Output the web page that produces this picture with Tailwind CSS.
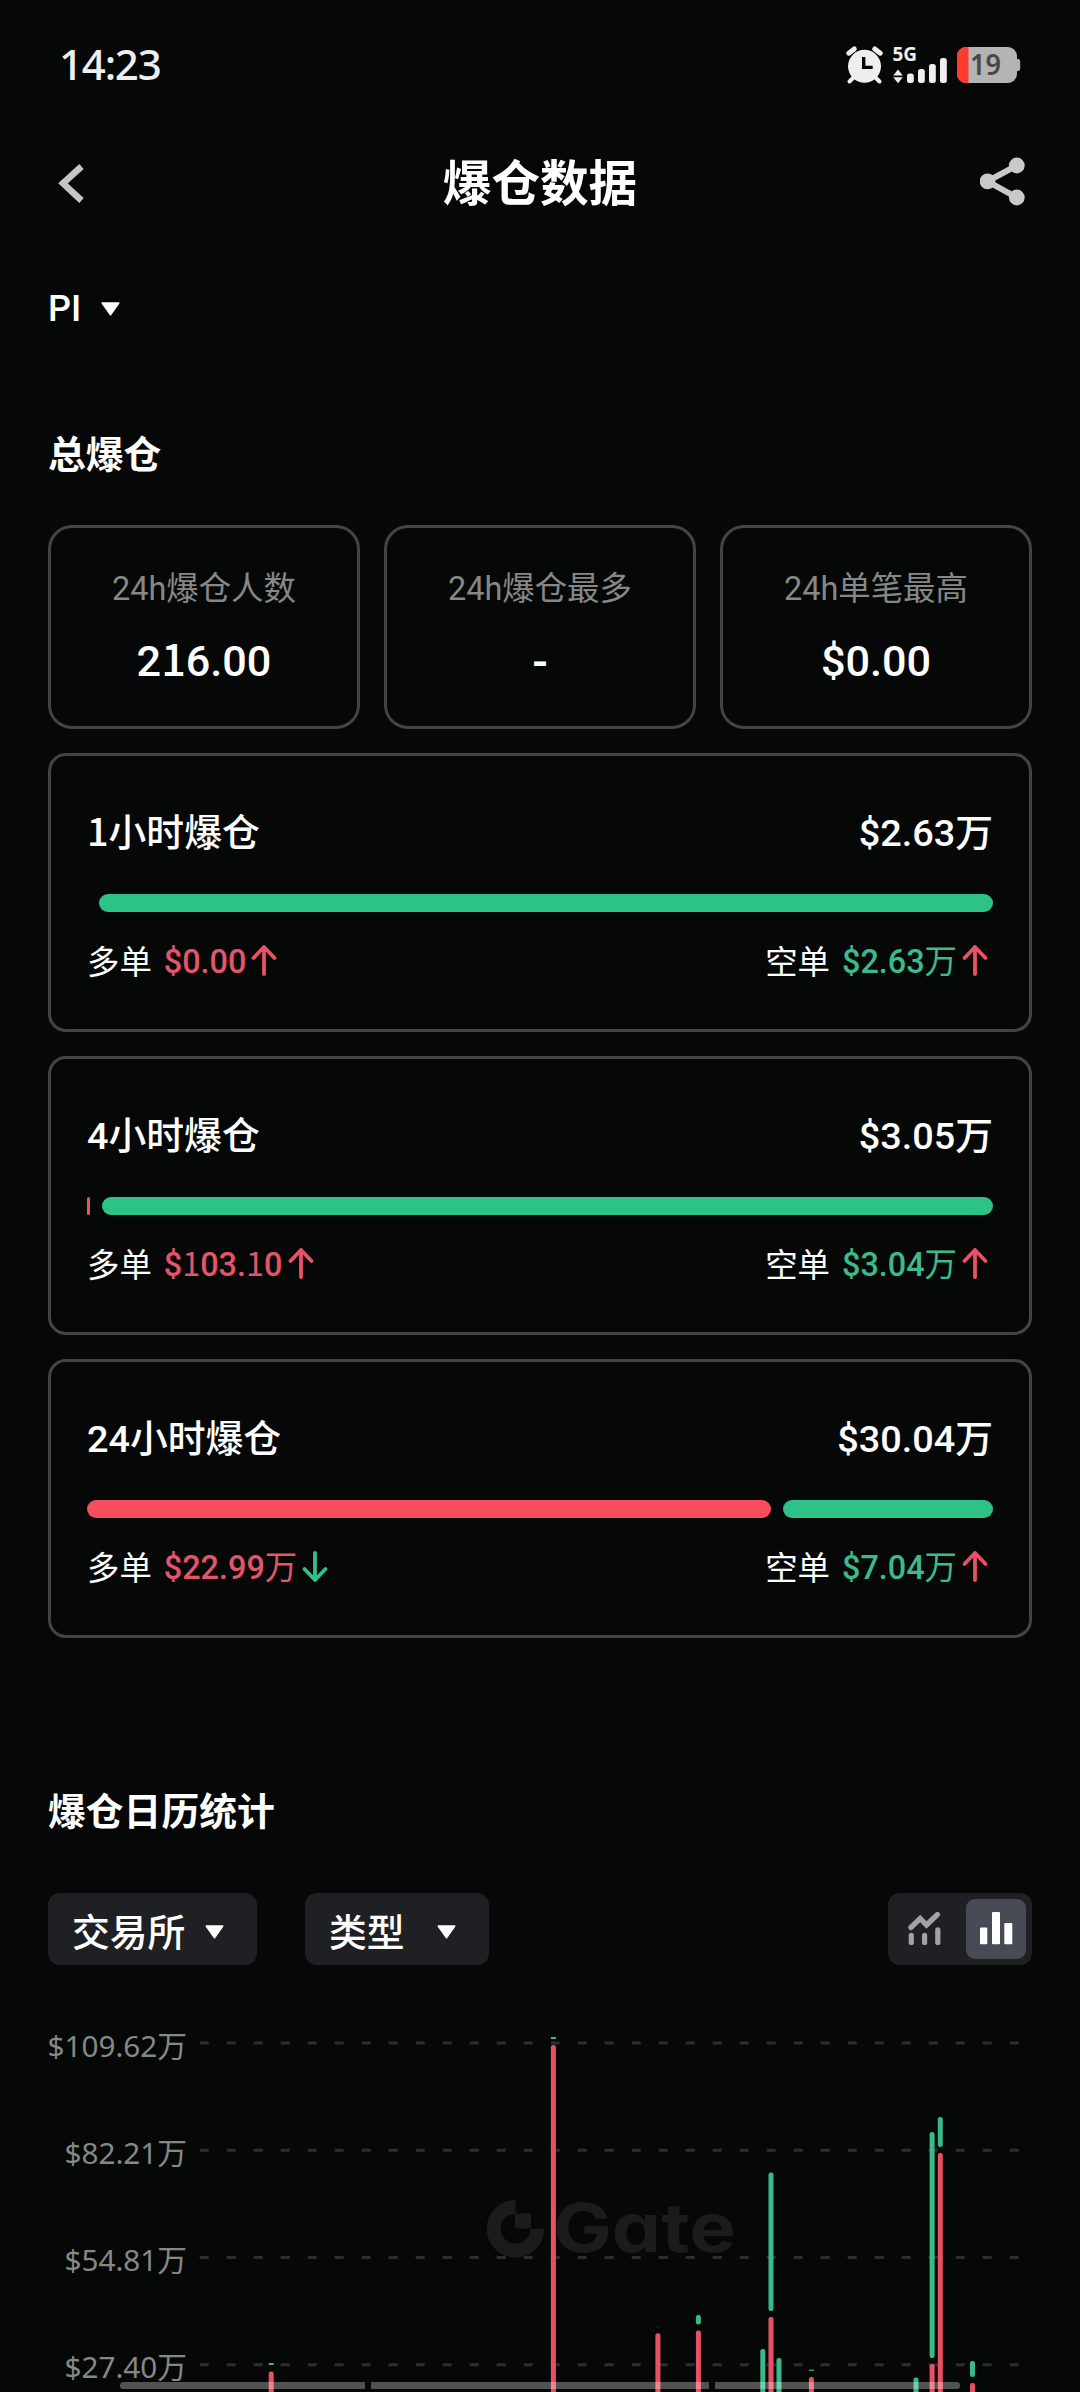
<!DOCTYPE html>
<html lang="zh-CN">
<head>
<meta charset="utf-8">
<title>爆仓数据</title>
<script src="https://cdn.jsdelivr.net/npm/@tailwindcss/browser@4"></script>
</head>
<body class="bg-[#060807]">
<main class="relative flex h-[2392px] w-[1080px] flex-col overflow-hidden bg-[#060807] font-['Noto_Sans_CJK_SC',sans-serif] text-white">

  <!-- Status bar -->
  <div class="flex h-[130px] shrink-0 items-center justify-between pr-[59px] pl-[59px]">
    <span class="-mt-[2px] font-['Noto_Sans',sans-serif] text-[42px] leading-[48px] font-medium tracking-[-1.2px] text-[#eeefee]">14:23</span>
    <svg class="h-[40px] w-[176px] overflow-visible" viewBox="845 45 176 40" fill="#eeefee">
      <circle cx="864.5" cy="66.3" r="16.5"/>
      <path d="M848.8 53.2l5.5-4.2M880.3 53.2l-5.5-4.2" fill="none" stroke="#eeefee" stroke-width="5" stroke-linecap="round"/>
      <path d="M854 77l-4.5 4.5M875 77l4.5 4.5" fill="none" stroke="#eeefee" stroke-width="4" stroke-linecap="round"/>
      <path d="M863.7 57v10.4h9" fill="none" stroke="#060807" stroke-width="3.4"/>
      <text x="892.5" y="61.300" font-family="Noto Sans, sans-serif" font-size="19" font-weight="700" textLength="24.500" lengthAdjust="spacingAndGlyphs">5G</text>
      <path d="M898 69.5l4.8 6h-9.6zM898 83.2l4.8-6h-9.6z"/>
      <rect x="907" y="73.5" width="6.8" height="9.5" rx="2.5"/>
      <rect x="918" y="69" width="6.8" height="14" rx="2.5"/>
      <rect x="929" y="64" width="6.8" height="19" rx="2.5"/>
      <rect x="940" y="58" width="6.8" height="25" rx="2.5"/>
      <rect x="1012" y="59" width="8.2" height="12" rx="2.5" fill="#b4b4b4"/>
      <rect x="957" y="47" width="60" height="36" rx="9" fill="#b4b4b4"/>
      <path d="M968.5 47H966a9 9 0 0 0-9 9v18a9 9 0 0 0 9 9h2.500z" fill="#ff3b30"/>
      <text x="970" y="75" font-family="Noto Sans, sans-serif" font-size="28" font-weight="600" fill="#484848" textLength="31" lengthAdjust="spacingAndGlyphs">19</text>
    </svg>
  </div>

  <!-- Navigation -->
  <header class="flex h-[106px] shrink-0 items-center justify-between px-[48px]">
    <svg class="h-[48px] w-[52px]" viewBox="48 159 52 48"><path d="M81.500 166.500L63 183.300L81.500 200.500" fill="none" stroke="#c4c5c4" stroke-width="6.500"/></svg>
    <h1 class="-mt-[6px] text-[48.6px] leading-[60px] font-bold">爆仓数据</h1>
    <svg class="h-[54px] w-[52px]" viewBox="980 156 52 54" fill="#c7c9ca"><path d="M1017 165.500L987.500 181.300L1017 197.500" fill="none" stroke="#c7c9ca" stroke-width="6"/><circle cx="987.500" cy="181.300" r="7.900"/><circle cx="1016.800" cy="165.500" r="7.900"/><circle cx="1016.800" cy="197.500" r="7.900"/></svg>
  </header>

  <!-- Coin selector -->
  <div class="flex h-[142px] shrink-0 items-center px-[48px]">
    <span class="mt-[3px] w-[53px] font-['Roboto',sans-serif] text-[36px] leading-[48px] font-medium">PI</span>
    <svg class="mt-[3px] h-[14px] w-[19px]" viewBox="0 0 19 14"><path d="M1.200 1h16.600L9.500 12.800z" fill="#fff" stroke="#fff" stroke-width="1.500" stroke-linejoin="round"/></svg>
  </div>

  <div class="flex h-[147px] shrink-0 items-center px-[48px]"><h2 class="text-[37.8px] leading-[48px] font-bold">总爆仓</h2></div>

  <!-- Totals -->
  <section class="grid shrink-0 grid-cols-3 gap-[24px] px-[48px]">
    <div class="flex h-[204px] flex-col items-center rounded-[24px] border-[3px] border-[#434544] pt-[34px]">
      <span class="text-[32.4px] leading-[48px] text-[#868887]"><span class="font-['Roboto'] leading-none">24h</span>爆仓人数</span>
      <span class="mt-[21px] text-[43.2px] leading-[52px] font-medium"><span class="font-['Roboto'] leading-none">2</span>1<span class="font-['Roboto'] leading-none">6.00</span></span>
    </div>
    <div class="flex h-[204px] flex-col items-center rounded-[24px] border-[3px] border-[#434544] pt-[34px]">
      <span class="text-[32.4px] leading-[48px] text-[#868887]"><span class="font-['Roboto'] leading-none">24h</span>爆仓最多</span>
      <span class="mt-[21px] text-[43.2px] leading-[52px] font-bold">-</span>
    </div>
    <div class="flex h-[204px] flex-col items-center rounded-[24px] border-[3px] border-[#434544] pt-[34px]">
      <span class="text-[32.4px] leading-[48px] text-[#868887]"><span class="font-['Roboto'] leading-none">24h</span>单笔最高</span>
      <span class="mt-[21px] text-[43.2px] leading-[52px] font-medium"><span class="font-['Roboto'] leading-none">$0.00</span></span>
    </div>
  </section>

  <!-- Periods -->
  <section class="mt-[24px] flex shrink-0 flex-col gap-[24px] px-[48px]">
    <article class="h-[279px] rounded-[18px] border-[3px] border-[#434544] px-[36px] pt-[50px]">
      <div class="flex justify-between text-[37.8px] leading-[48px] font-medium"><span>1小时爆仓</span><span><span class="font-['Roboto'] leading-none">$2.63</span>万</span></div>
      <div class="mt-[40px] flex h-[18px] gap-[12px]"><div class="rounded-full bg-[#f84c5f]" style="width:0"></div><div class="flex-1 rounded-full bg-[#2dc287]"></div></div>
      <div class="mt-[24px] flex h-[48px] items-center justify-between text-[32.4px] leading-[48px]">
        <div class="flex items-center"><span>多单</span><span class="-mt-[3px] ml-[12px] text-[#e4556a]"><span class="font-['Roboto'] leading-none font-medium">$0.00</span></span><svg class="h-[36px] w-[36px]" viewBox="0 0 36 36"><path d="M18 32V5M7.500 16L18 5L28.500 16" fill="none" stroke="#ea5166" stroke-width="3.800" stroke-linecap="round" stroke-linejoin="round"/></svg></div>
        <div class="flex items-center"><span>空单</span><span class="-mt-[3px] ml-[12px] text-[#3dba8c]"><span class="font-['Roboto'] leading-none font-medium">$2.63</span>万</span><svg class="h-[36px] w-[36px]" viewBox="0 0 36 36"><path d="M18 32V5M7.500 16L18 5L28.500 16" fill="none" stroke="#ea5166" stroke-width="3.800" stroke-linecap="round" stroke-linejoin="round"/></svg></div>
      </div>
    </article>
    <article class="h-[279px] rounded-[18px] border-[3px] border-[#434544] px-[36px] pt-[50px]">
      <div class="flex justify-between text-[37.8px] leading-[48px] font-medium"><span><span class="font-['Roboto'] leading-none">4</span>小时爆仓</span><span><span class="font-['Roboto'] leading-none">$3.05</span>万</span></div>
      <div class="mt-[40px] flex h-[18px] gap-[12px]"><div class="rounded-full bg-[#e05468]" style="width:3px"></div><div class="flex-1 rounded-full bg-[#2dc287]"></div></div>
      <div class="mt-[24px] flex h-[48px] items-center justify-between text-[32.4px] leading-[48px]">
        <div class="flex items-center"><span>多单</span><span class="-mt-[3px] ml-[12px] text-[#e4556a]"><span class="font-['Roboto'] leading-none font-medium">$</span>1<span class="font-['Roboto'] leading-none font-medium">03.</span>1<span class="font-['Roboto'] leading-none font-medium">0</span></span><svg class="ml-[1px] h-[36px] w-[36px]" viewBox="0 0 36 36"><path d="M18 32V5M7.500 16L18 5L28.500 16" fill="none" stroke="#ea5166" stroke-width="3.800" stroke-linecap="round" stroke-linejoin="round"/></svg></div>
        <div class="flex items-center"><span>空单</span><span class="-mt-[3px] ml-[12px] text-[#3dba8c]"><span class="font-['Roboto'] leading-none font-medium">$3.04</span>万</span><svg class="h-[36px] w-[36px]" viewBox="0 0 36 36"><path d="M18 32V5M7.500 16L18 5L28.500 16" fill="none" stroke="#ea5166" stroke-width="3.800" stroke-linecap="round" stroke-linejoin="round"/></svg></div>
      </div>
    </article>
    <article class="h-[279px] rounded-[18px] border-[3px] border-[#434544] px-[36px] pt-[50px]">
      <div class="flex justify-between text-[37.8px] leading-[48px] font-medium"><span><span class="font-['Roboto'] leading-none">24</span>小时爆仓</span><span><span class="font-['Roboto'] leading-none">$30.04</span>万</span></div>
      <div class="mt-[40px] flex h-[18px] gap-[12px]"><div class="rounded-full bg-[#f84c5f]" style="width:684px"></div><div class="flex-1 rounded-full bg-[#2dc287]"></div></div>
      <div class="mt-[24px] flex h-[48px] items-center justify-between text-[32.4px] leading-[48px]">
        <div class="flex items-center"><span>多单</span><span class="-mt-[3px] ml-[12px] text-[#e4556a]"><span class="font-['Roboto'] leading-none font-medium">$22.99</span>万</span><svg class="h-[36px] w-[36px]" viewBox="0 0 36 36"><path d="M18 5V32M7.500 21L18 32L28.500 21" fill="none" stroke="#2fc189" stroke-width="3.800" stroke-linecap="round" stroke-linejoin="round"/></svg></div>
        <div class="flex items-center"><span>空单</span><span class="-mt-[3px] ml-[12px] text-[#3dba8c]"><span class="font-['Roboto'] leading-none font-medium">$7.04</span>万</span><svg class="h-[36px] w-[36px]" viewBox="0 0 36 36"><path d="M18 32V5M7.500 16L18 5L28.500 16" fill="none" stroke="#ea5166" stroke-width="3.800" stroke-linecap="round" stroke-linejoin="round"/></svg></div>
      </div>
    </article>
  </section>

  <div class="mt-[135px] flex h-[72px] shrink-0 items-center px-[48px]"><h2 class="text-[37.8px] leading-[48px] font-bold">爆仓日历统计</h2></div>

  <!-- Filters -->
  <div class="mt-[48px] flex h-[72px] shrink-0 items-center px-[48px]">
    <div class="flex h-[72px] w-[209px] items-center justify-between rounded-[12px] bg-[#1f2024] pr-[33px] pl-[24px]">
      <span class="mt-[2px] text-[37.8px] leading-[48px] font-medium">交易所</span>
      <svg class="mt-[5px] h-[14px] w-[19px]" viewBox="0 0 19 14"><path d="M1.200 1h16.600L9.500 12.800z" fill="#fff" stroke="#fff" stroke-width="1.500" stroke-linejoin="round"/></svg>
    </div>
    <div class="ml-[48px] flex h-[72px] w-[184px] items-center justify-between rounded-[12px] bg-[#1f2024] pr-[33px] pl-[24px]">
      <span class="mt-[2px] text-[37.8px] leading-[48px] font-medium">类型</span>
      <svg class="mt-[5px] h-[14px] w-[19px]" viewBox="0 0 19 14"><path d="M1.200 1h16.600L9.500 12.800z" fill="#fff" stroke="#fff" stroke-width="1.500" stroke-linejoin="round"/></svg>
    </div>
    <div class="ml-auto flex h-[72px] w-[144px] items-center justify-between rounded-[12px] bg-[#1f2024] p-[6px]">
      <svg class="h-[60px] w-[60px]" viewBox="894 1899 60 60" fill="none" stroke="#a1a2a8" stroke-width="5.200" stroke-linecap="round" stroke-linejoin="miter"><path d="M910.800 1927.500L920.200 1918.500L926.500 1925L937.500 1914.500"/><path d="M911.300 1935.300V1942.500M924.600 1935.300V1942.500M937.800 1929.800V1942.500"/></svg>
      <div class="h-[60px] w-[60px] rounded-[9px] bg-[#494b54]"><svg class="h-[60px] w-[60px]" viewBox="966 1899 60 60" fill="#fff"><rect x="980" y="1927.500" width="7.300" height="16.700" rx="1"/><rect x="992" y="1912" width="8" height="32.200" rx="1"/><rect x="1004.300" y="1923" width="8" height="21.200" rx="1"/></svg></div>
    </div>
  </div>

  <!-- Calendar chart -->
  <section class="flex h-[427px] shrink-0">
    <div class="flex w-[187px] shrink-0 flex-col pt-[27px] text-right font-['Noto_Sans','Noto_Sans_CJK_SC',sans-serif] text-[29.7px] leading-[107px] text-[#868887]">
      <div class="h-[107px]">$109.62万</div>
      <div class="h-[107px]">$82.21万</div>
      <div class="h-[107px]">$54.81万</div>
      <div class="h-[107px]">$27.40万</div>
    </div>
    <svg class="h-[427px] w-[893px]" viewBox="187 1965 893 427">
      <g stroke="#2d2f2f" stroke-width="3" stroke-dasharray="9 18">
        <path d="M199.700 2043H1019M199.700 2150.300H1019M199.700 2257.500H1019M199.700 2364.800H1019"/>
      </g>
      <g fill="#191b1c">
        <path d="M515.500 2207A21.800 21.800 0 1 0 537.300 2229" fill="none" stroke="#191b1c" stroke-width="14"/>
        <rect x="515" y="2213.500" width="16" height="15"/>
        <text x="553" y="2252" font-family="Inter, sans-serif" font-size="68" font-weight="700" textLength="183" lengthAdjust="spacingAndGlyphs" style="font-feature-settings:'cv11'">Gate</text>
      </g>
      <g fill="#38b987">
        <rect x="268.700" y="2363" width="5" height="2"/>
        <rect x="550.900" y="2037" width="5" height="2"/>
        <rect x="695.900" y="2315" width="5" height="9.500" rx="2.200"/>
        <rect x="760.300" y="2349" width="5" height="60" rx="2.200"/>
        <rect x="768.500" y="2172.500" width="5" height="138.500" rx="2.200"/>
        <rect x="776.500" y="2358" width="5" height="60" rx="2.200"/>
        <rect x="808.900" y="2369.600" width="5" height="1.200"/>
        <rect x="913.500" y="2377.500" width="5" height="60" rx="2.200"/>
        <rect x="929.600" y="2132" width="5" height="226" rx="2.200"/>
        <rect x="937.800" y="2117" width="5" height="30" rx="2.200"/>
        <rect x="970" y="2361" width="5" height="16" rx="2.200"/>
      </g>
      <g fill="#ea5064">
        <rect x="268.700" y="2371.500" width="5" height="60" rx="2.200"/>
        <rect x="550.900" y="2045" width="5" height="360" rx="2.200"/>
        <rect x="655.400" y="2333.300" width="5" height="80" rx="2.200"/>
        <rect x="695.900" y="2330.500" width="5" height="80" rx="2.200"/>
        <rect x="768.500" y="2317" width="5" height="90" rx="2.200"/>
        <rect x="808.900" y="2377" width="5" height="60" rx="2.200"/>
        <rect x="929.600" y="2364" width="5" height="60" rx="2.200"/>
        <rect x="937.800" y="2153" width="5" height="260" rx="2.200"/>
        <rect x="970" y="2383" width="5" height="60" rx="2.200"/>
      </g>
      <rect x="655.400" y="2326.500" width="5" height="1" fill="#1d1f20"/>
    </svg>
  </section>

  <!-- Gesture hints over the content -->
  <div class="absolute bottom-[3px] left-[120px] flex h-[7px] w-[840px] gap-[6px]">
    <div class="w-[245px] rounded-l-full bg-white/30"></div>
    <div class="flex-1 bg-white/30"></div>
    <div class="w-[245px] rounded-r-full bg-white/30"></div>
  </div>
</main>
</body>
</html>
